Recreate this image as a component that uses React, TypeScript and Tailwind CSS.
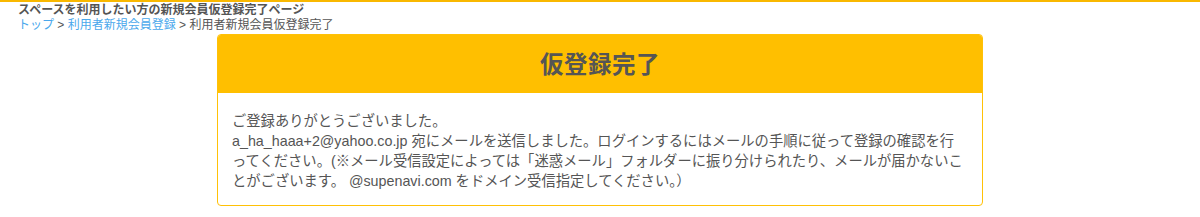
import React from 'react';

const fontStack = '"Liberation Sans", "Noto Sans CJK JP", sans-serif';

const Breadcrumb: React.FC = () => (
  <div className="text-[12px] leading-[15px] text-[#555]">
    <a href="#" className="text-[#4aa8ec]">トップ</a>
    <span> &gt; </span>
    <a href="#" className="text-[#4aa8ec]">利用者新規会員登録</a>
    <span> &gt; </span>
    <span>利用者新規会員仮登録完了</span>
  </div>
);

const App: React.FC = () => {
  return (
    <div className="min-h-[217px] bg-white border-t-2 border-[#f9b800]" style={{ fontFamily: fontStack }}>
      <div className="pl-[18px] pt-[1px]">
        <h1 className="text-[12px] leading-[15px] font-bold text-[#555]">
          スペースを利用したい方の新規会員仮登録完了ページ
        </h1>
        <Breadcrumb />
      </div>

      <div className="mx-auto mt-[1px] w-[766px] rounded-[4px] border border-[#ffc107] overflow-hidden">
        <div className="h-[58px] bg-[#ffbf00] flex items-center justify-center pt-[4px]">
          <h2 className="text-[23.5px] font-bold text-[#555] tracking-[0.5px]">仮登録完了</h2>
        </div>
        <div className="px-[14px] pt-[18px] pb-[14px] text-[14.3px] leading-[20px] text-[#555]">
          <p>ご登録ありがとうございました。</p>
          <p>
            a_ha_haaa+2@yahoo.co.jp 宛にメールを送信しました。ログインするにはメールの手順に従って登録の確認を行ってください。(※メール受信設定によっては「迷惑メール」フォルダーに振り分けられたり、メールが届かないことがございます。 @supenavi.com をドメイン受信指定してください。）
          </p>
        </div>
      </div>
    </div>
  );
};

export default App;
